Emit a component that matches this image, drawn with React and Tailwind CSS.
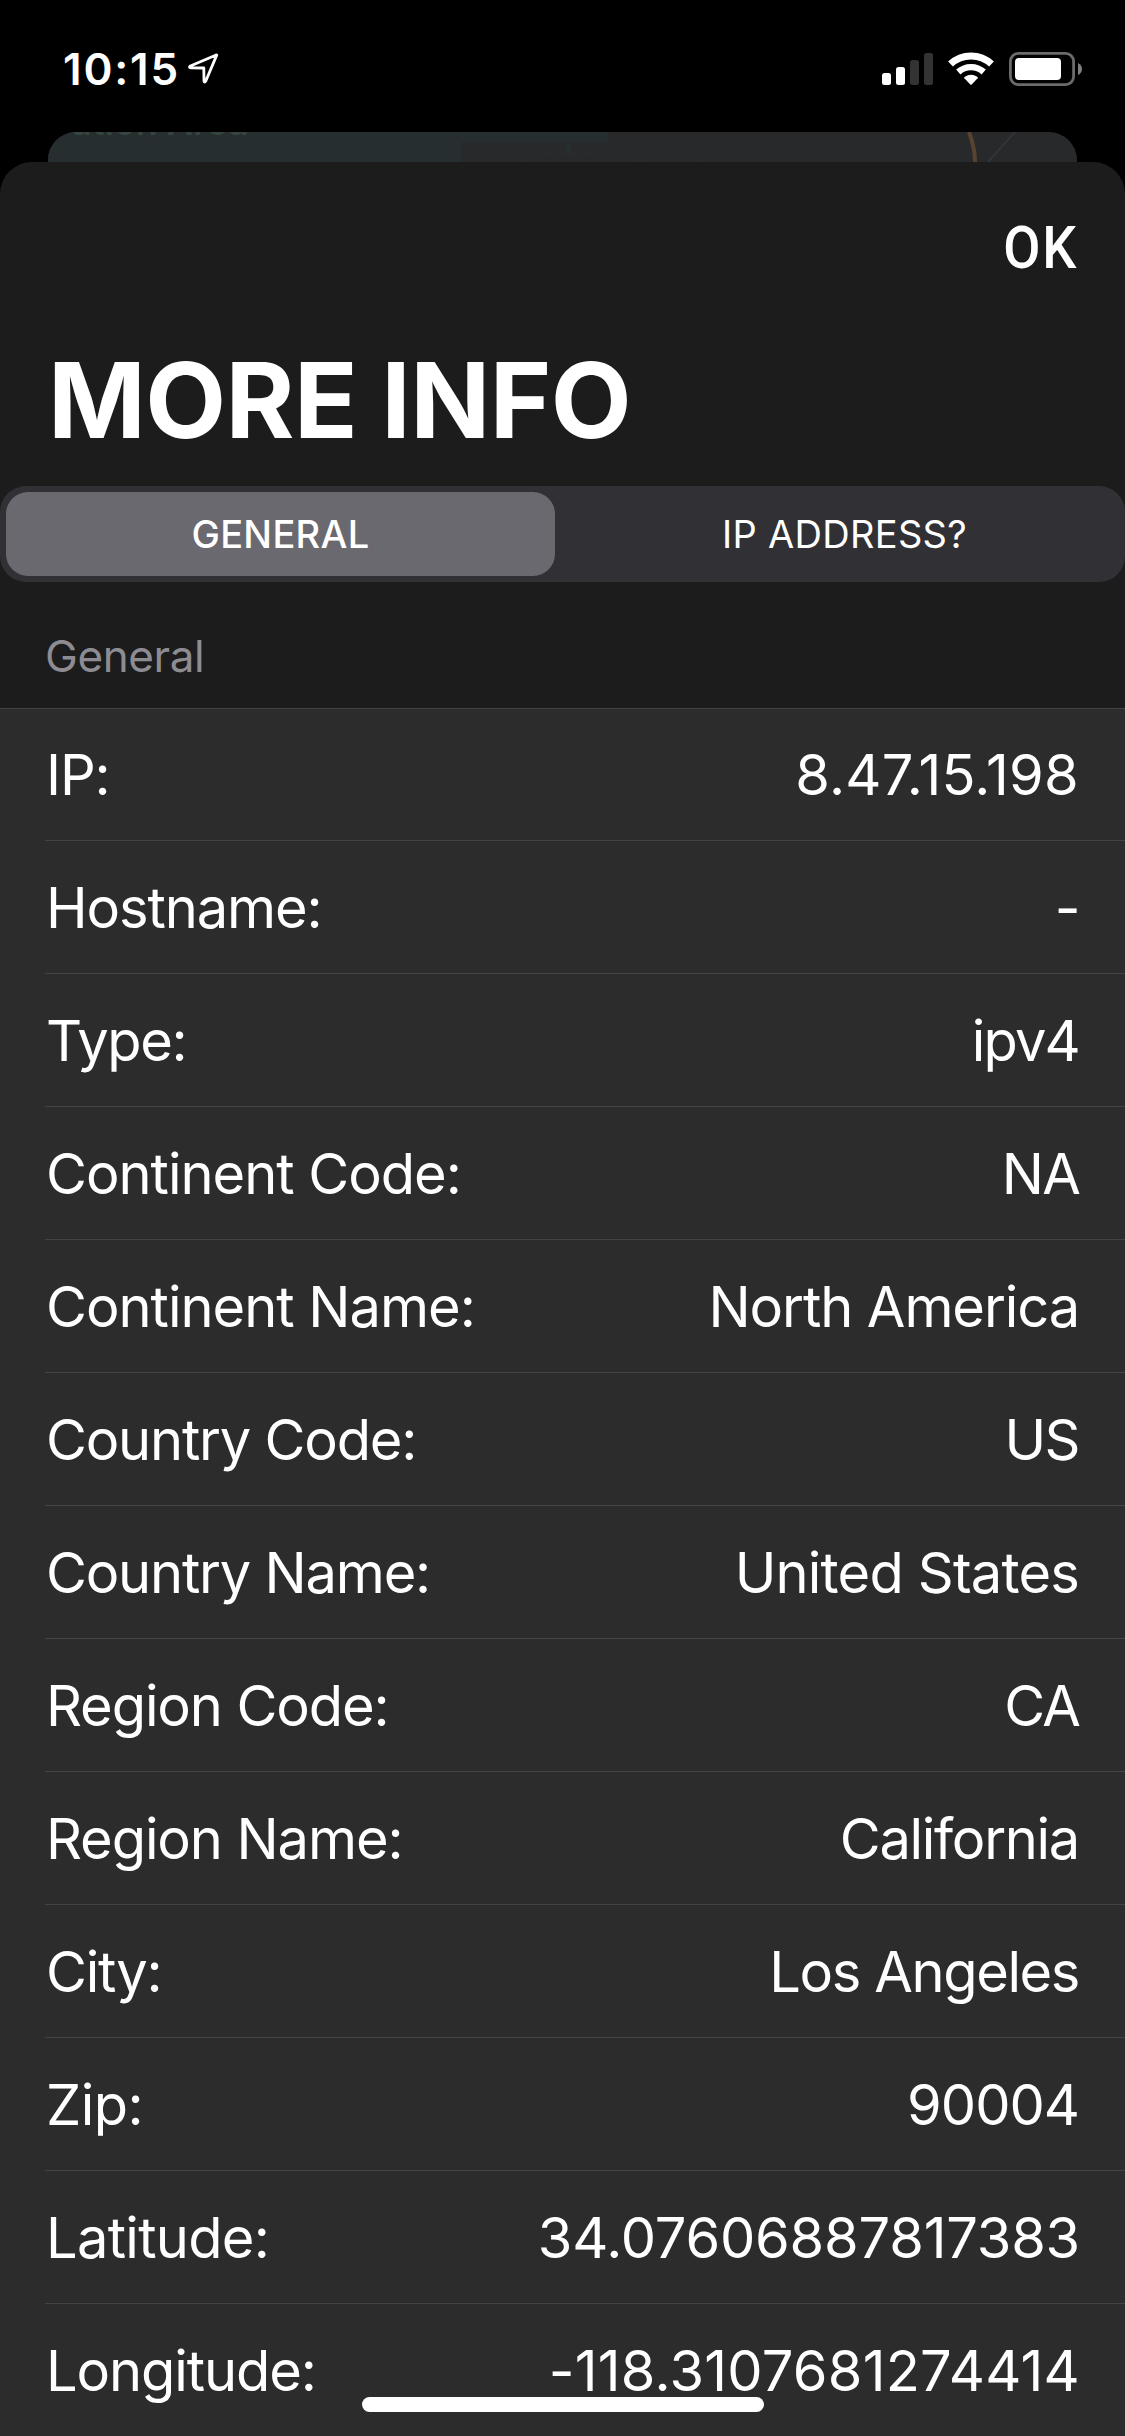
import React, { useState } from 'react';
import clsx from 'clsx';

/**
 * More Info sheet
 * - status bar
 * - map card peeking out behind the sheet
 * - segmented control and the list of details
 */

const tabs = ['GENERAL', 'IP ADDRESS?'];

// labelClass / valueClass: letter spacing of each text
const rows = [
  { label: 'IP:', value: '8.47.15.198', labelClass: 'tracking-[-1.1px]', valueClass: 'tracking-[0.3px]' },
  { label: 'Hostname:', value: '-', labelClass: 'tracking-[-1.1px]', valueClass: 'tracking-[-1.5px]' },
  { label: 'Type:', value: 'ipv4', labelClass: 'tracking-[-1.4px]', valueClass: 'tracking-[-1.8px]' },
  { label: 'Continent Code:', value: 'NA', labelClass: 'tracking-[-1px]', valueClass: 'tracking-[-1.8px]' },
  { label: 'Continent Name:', value: 'North America', labelClass: 'tracking-[-1px]', valueClass: 'tracking-[-1.1px]' },
  { label: 'Country Code:', value: 'US', labelClass: 'tracking-[-1.2px]', valueClass: 'tracking-[-1.5px]' },
  { label: 'Country Name:', value: 'United States', labelClass: 'tracking-[-1.2px]', valueClass: 'tracking-[-0.8px]' },
  { label: 'Region Code:', value: 'CA', labelClass: 'tracking-[-1.1px]', valueClass: 'tracking-[-1.8px]' },
  { label: 'Region Name:', value: 'California', labelClass: 'tracking-[-1.1px]', valueClass: 'tracking-[-1.3px]' },
  { label: 'City:', value: 'Los Angeles', labelClass: 'tracking-[-1.2px]', valueClass: 'tracking-[-1.4px]' },
  { label: 'Zip:', value: '90004', labelClass: 'tracking-[-0.5px]', valueClass: 'tracking-[-1px]' },
  { label: 'Latitude:', value: '34.07606887817383', labelClass: 'tracking-[-0.7px]', valueClass: '-mr-px tracking-[-0.2px]' },
  { label: 'Longitude:', value: '-118.3107681274414', labelClass: 'tracking-[-1.1px]', valueClass: '-mr-px tracking-[0.25px]' },
];

function StatusBar() {
  return (
    <div className="flex h-[132px] items-start justify-between pl-[63px] pr-[42px] pt-[48px]">
      <div className="flex items-start">
        <span className="text-[44px] leading-[42px] font-semibold tracking-[1.8px]">10:15</span>
        <svg className="ml-[7px] mt-[5px]" width="32" height="32" viewBox="0 0 32 32" fill="none">
          <path
            d="M29.5 2.6 Q30.4 1.6 28.6 2.2 L3.4 13 Q1.4 14.4 3.6 14.8 L16.8 15 L17 28 Q17.6 30 18.8 28 Z"
            stroke="#fff"
            strokeWidth="2.8"
            strokeLinejoin="round"
          />
        </svg>
      </div>
      <svg className="mt-[4px]" width="201" height="34" viewBox="882 52 201 34">
        {/* signal */}
        <rect x="882" y="73" width="9" height="12" rx="2.5" fill="#fff" />
        <rect x="896" y="67" width="9" height="18" rx="2.5" fill="#fff" />
        <rect x="910" y="60" width="9" height="25" rx="2.5" fill="#333" />
        <rect x="924" y="53" width="9" height="32" rx="2.5" fill="#333" />
        {/* wifi */}
        <g fill="none" stroke="#fff">
          <path d="M950.5 64 A30 30 0 0 1 991.5 64" strokeWidth="7" />
          <path d="M958.3 72 A19 19 0 0 1 983.7 72" strokeWidth="6.4" />
        </g>
        <path d="M964.4 78.3 Q963.8 77.5 964.8 76.8 Q971 72.6 977.2 76.8 Q978.2 77.5 977.6 78.3 L971.7 84.4 Q971 85 970.3 84.4 Z" fill="#fff" />
        {/* battery */}
        <rect x="1010.4" y="53.4" width="63.2" height="31.2" rx="8" fill="none" stroke="#6b6b6b" strokeWidth="2.8" />
        <rect x="1015" y="58" width="46" height="22" rx="4" fill="#fff" />
        <path d="M1078 63 Q1082 65 1082 69 Q1082 73 1078 75 Z" fill="#808080" />
      </svg>
    </div>
  );
}

// Top edge of the map screen
function MapCard() {
  return (
    <div className="relative mx-[48px] h-[30px] overflow-hidden rounded-t-[28px] bg-[#28292b]">
      <svg className="block" width="1029" height="30" viewBox="48 132 1029 30" fill="none">
        <path d="M48 132 H608 V142 H570 L572 156 L566 155 V142 H461 V162 H48 Z" fill="#262e30" />
        <path d="M155 134 L151 162" stroke="#2a3030" />
        <path d="M523 162 L545 153 L624 154 L634 162 M640 162 L666 147 L694 149 L704 162" stroke="#2c2d2f" />
        <path d="M969 132 Q975 148 975 162" stroke="#59432e" strokeWidth="4" />
        <path d="M1015 132 L988 162" stroke="#36373a" strokeWidth="1.5" />
      </svg>
      <span className="absolute left-[23px] top-[-32px] text-[36px] leading-[44px] font-semibold text-[#35463f]">
        ation Area
      </span>
    </div>
  );
}

function SegmentedControl({ active, onChange }) {
  return (
    <div className="flex h-[96px] rounded-[26px] bg-[#313035] p-[6px]">
      {tabs.map((tab, i) => (
        <button
          key={tab}
          onClick={() => onChange(i)}
          className={clsx(
            'h-[84px] text-[38px] tracking-[0.3px]',
            i === 0 ? 'w-[549px]' : 'grow pl-[15px]',
            active === i ? 'rounded-[22px] bg-[#6a696f] font-medium' : 'font-normal'
          )}
        >
          {tab}
        </button>
      ))}
    </div>
  );
}

function InfoRow({ label, value, labelClass, valueClass }) {
  return (
    <li className="ml-[45px] flex h-[133px] items-center justify-between border-b border-[#434344] pl-px pr-[46px] pt-[2px] first:h-[132px] first:pt-0">
      <span className={labelClass}>{label}</span>
      <span className={valueClass}>{value}</span>
    </li>
  );
}

export default function App() {
  const [active, setActive] = useState(0);

  return (
    <div className="relative h-[2436px] w-[1125px] overflow-hidden bg-black font-['Inter',sans-serif] text-white">
      <StatusBar />
      <MapCard />

      {/* Sheet */}
      <div className="h-[2274px] rounded-t-[32px] bg-[#1c1c1c]">
        <div className="flex h-[172px] justify-end pr-[47px] pt-[50px]">
          <button className="h-[72px] origin-right scale-x-[0.9] font-['Roboto',sans-serif] text-[60px] leading-[72px] font-medium tracking-[2px]">
            OK
          </button>
        </div>
        <h1 className="h-[152px] pl-[48px] text-[105px] leading-[132px] font-bold tracking-[-0.6px]">MORE INFO</h1>
        <SegmentedControl active={active} onChange={setActive} />

        <h2 className="h-[126px] pl-[45px] pt-[46px] text-[44px] leading-[56px] tracking-[-0.4px] text-[#8d8c92]">General</h2>
        <ul className="border-t border-[#434344] bg-[#2c2c2c] text-[56px]">
          {rows.map(row => (
            <InfoRow key={row.label} {...row} />
          ))}
        </ul>
      </div>

      {/* Home indicator */}
      <div className="absolute bottom-[24px] left-[362px] h-[15px] w-[402px] rounded-full bg-white" />
    </div>
  );
}
